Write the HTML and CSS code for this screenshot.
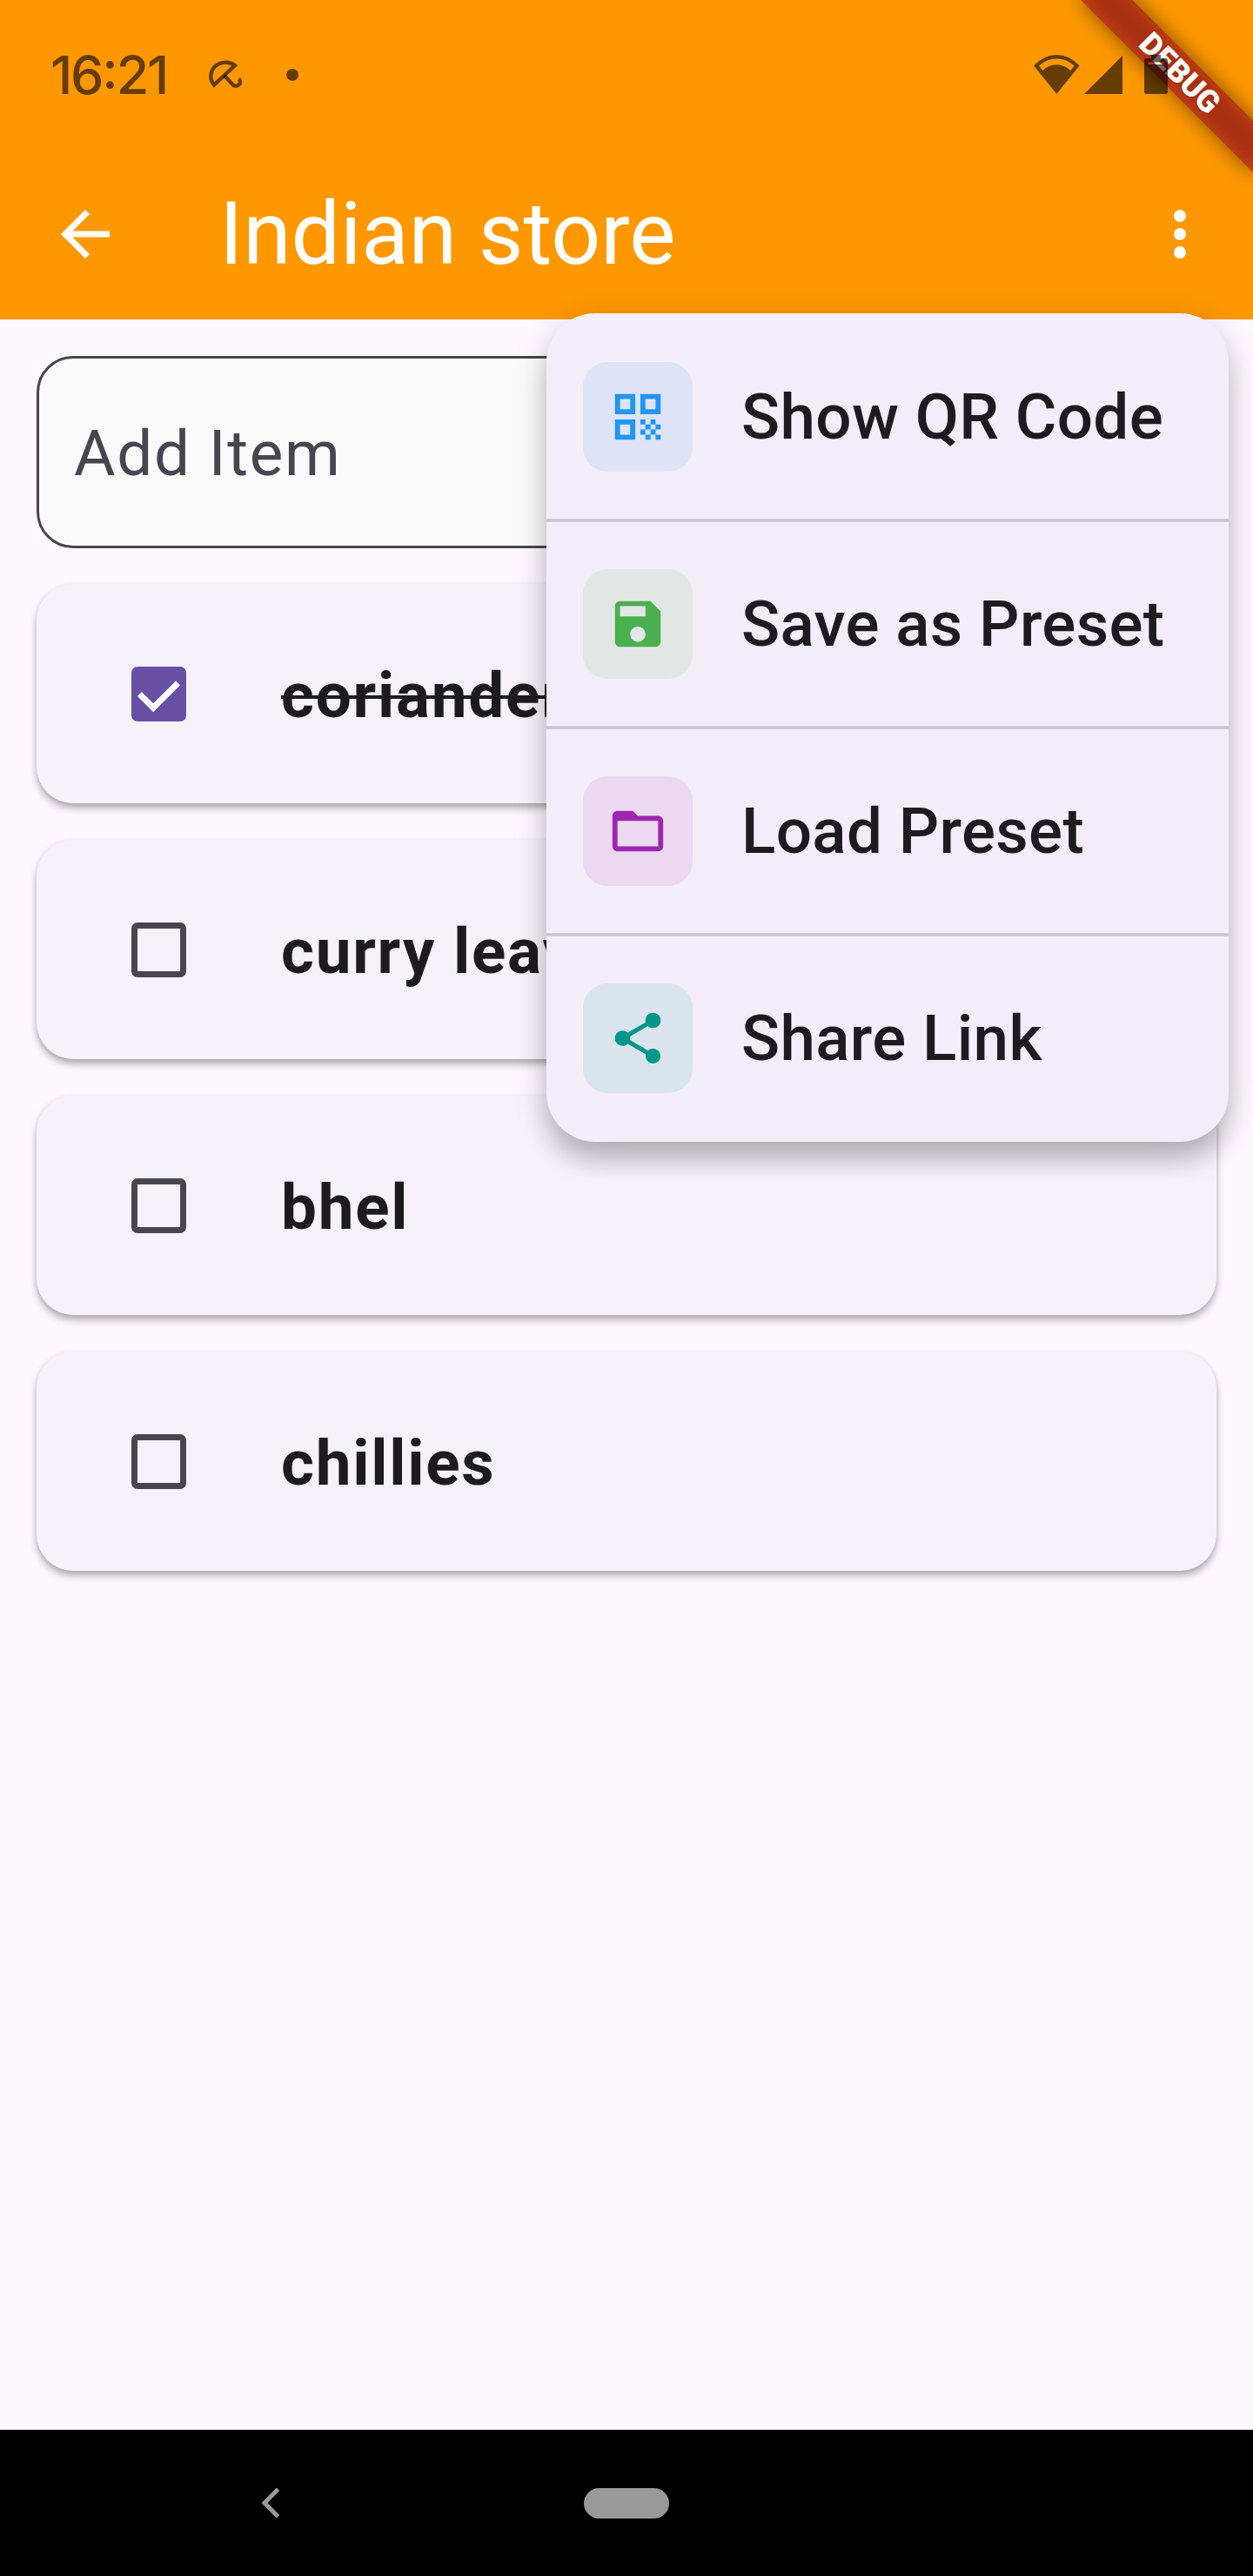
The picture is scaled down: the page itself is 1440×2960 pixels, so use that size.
FILE: index.html
```html
<!DOCTYPE html>
<html lang="en">
<head>
<meta charset="utf-8">
<title>Indian store</title>
<link rel="stylesheet" href="styles.css">
</head>
<body>
<div class="screen">
  <header class="header">
    <div class="status">
      <span class="time">16:21</span>
      <svg class="umbrella" width="40" height="34" viewBox="0 0 40 34" fill="none" stroke="currentColor" stroke-width="4.4">
        <path d="M5.9 28.7C-.5 21 2 10 10 5.200C17 .9 25.500 2.500 30 6.200Z"/>
        <path d="M17.500 17.500L27.500 28.200C30.500 31.500 36.500 29 36 24.500Q35.600 22.500 34.300 21.600"/>
      </svg>
      <span class="dot"></span>
      <span class="spacer"></span>
      <svg class="wifi" width="53" height="45" viewBox="0 0 53 45" fill="currentColor">
        <path fill-rule="evenodd" d="M0 12.500Q11.500 0 26.300 0T52.600 12.500L26.300 45ZM6 12.800L10.300 18Q17 11.300 26.300 11.300T42.300 18L46.700 12.800Q38 4.500 26.300 4.500T6 12.800Z"/>
      </svg>
      <svg class="signal" width="44" height="44" viewBox="0 0 44 44" fill="currentColor"><path d="M44 0V44H0Z"/></svg>
      <svg class="battery" width="27" height="45" viewBox="0 0 27 45" fill="currentColor">
        <path fill-rule="evenodd" d="M8 0H19V4H25Q27 4 27 6V43Q27 45 25 45H2Q0 45 0 43V6Q0 4 2 4H8ZM4.500 8.500V11H22.500V8.500Z"/>
      </svg>
    </div>
    <div class="appbar">
      <svg class="back" width="84" height="84" viewBox="0 0 24 24" fill="#fff"><path d="M20 11H7.830l5.590-5.590L12 4l-8 8 8 8 1.410-1.410L7.830 13H20v-2z"/></svg>
      <h1 class="title">Indian store</h1>
      <svg class="more" width="84" height="84" viewBox="0 0 24 24" fill="#fff"><circle cx="12" cy="6" r="2"/><circle cx="12" cy="12" r="2"/><circle cx="12" cy="18" r="2"/></svg>
    </div>
  </header>

  <main class="content">
    <div class="field">Add Item</div>
    <ul class="list">
      <li class="card">
        <span class="check checked"><svg width="63" height="63" viewBox="0 0 18 18" fill="none" stroke="#fff" stroke-width="2"><path d="M2.700 9L7.200 13.500L15.300 5.400"/></svg></span>
        <span class="name done">coriander</span>
      </li>
      <li class="card"><span class="check"></span><span class="name">curry leaves</span></li>
      <li class="card"><span class="check"></span><span class="name">bhel</span></li>
      <li class="card"><span class="check"></span><span class="name">chillies</span></li>
    </ul>
  </main>

  <nav class="navbar">
    <svg class="nav-back" width="22" height="36" viewBox="0 0 22 36" fill="none" stroke="#999" stroke-width="5"><path d="M19.500 2.300L4 18L19.500 33.700"/></svg>
    <span class="pill"></span>
  </nav>

  <div class="menu">
    <div class="menu-item">
      <span class="badge qr"><svg width="70" height="70" viewBox="0 0 24 24" fill="currentColor"><path d="M3 11h8V3H3v8zm2-6h4v4H5V5zM3 21h8v-8H3v8zm2-6h4v4H5v-4zM13 3v8h8V3h-8zm6 6h-4V5h4v4zM19 19h2v2h-2zM13 13h2v2h-2zM15 15h2v2h-2zM13 17h2v2h-2zM15 19h2v2h-2zM17 17h2v2h-2zM17 13h2v2h-2zM19 15h2v2h-2z"/></svg></span>
      <span>Show QR Code</span>
    </div>
    <div class="divider"></div>
    <div class="menu-item">
      <span class="badge save"><svg width="70" height="70" viewBox="0 0 24 24" fill="currentColor"><path d="M17 3H5c-1.110 0-2 .9-2 2v14c0 1.100.89 2 2 2h14c1.100 0 2-.9 2-2V7l-4-4zm-5 16c-1.660 0-3-1.340-3-3s1.340-3 3-3 3 1.340 3 3-1.340 3-3 3zm3-10H5V5h10v4z"/></svg></span>
      <span>Save as Preset</span>
    </div>
    <div class="divider"></div>
    <div class="menu-item">
      <span class="badge load"><svg width="70" height="70" viewBox="0 0 24 24" fill="currentColor"><path d="M20 6h-8l-2-2H4c-1.100 0-1.990.9-1.990 2L2 18c0 1.100.9 2 2 2h16c1.100 0 2-.9 2-2V8c0-1.100-.9-2-2-2zm0 12H4V8h16v10z"/></svg></span>
      <span>Load Preset</span>
    </div>
    <div class="divider"></div>
    <div class="menu-item">
      <span class="badge share"><svg width="70" height="70" viewBox="0 0 24 24" fill="currentColor"><path d="M18 16.080c-.76 0-1.440.3-1.960.77L8.910 12.700c.05-.23.090-.46.090-.7s-.04-.47-.09-.7l7.050-4.110c.54.5 1.250.81 2.040.81 1.660 0 3-1.340 3-3s-1.340-3-3-3-3 1.340-3 3c0 .24.040.47.090.7L8.040 9.810C7.500 9.310 6.790 9 6 9c-1.660 0-3 1.340-3 3s1.340 3 3 3c.79 0 1.500-.31 2.040-.81l7.120 4.160c-.05.21-.08.43-.08.65 0 1.610 1.310 2.920 2.920 2.920s2.920-1.310 2.920-2.920-1.310-2.920-2.920-2.920z"/></svg></span>
      <span>Share Link</span>
    </div>
  </div>

  <div class="ribbon"><span class="ribbon-label">DEBUG</span></div>
</div>
</body>
</html>
```
FILE: styles.css
```css
* { box-sizing: border-box; }

body {
  margin: 0;
  font-family: Roboto, sans-serif;
  color: #1d1b20;
}

svg { display: block; flex: none; }

.screen {
  position: relative;
  display: flex;
  flex-direction: column;
  width: 1440px;
  height: 2960px;
  overflow: hidden;
  background: #fef7ff;
}

.header {
  height: 367px;
  background: #ff9800;
}

/* system status icons are painted over the app, ribbon included */
.status {
  position: relative;
  z-index: 3;
  display: flex;
  align-items: center;
  height: 171px;
  padding: 0 98px 0 58px;
  color: rgba(0, 0, 0, 0.6);
}

.time {
  width: 182px;
  font: 550 61px/70px Inter, sans-serif;
  font-feature-settings: "case";
  letter-spacing: -2.2px;
}

.dot {
  width: 14px;
  height: 14px;
  margin-left: 49px;
  border-radius: 50%;
  background: currentColor;
}

.spacer { flex: 1; }
.signal { margin-left: 5px; }
.battery { margin-left: 25px; }

.appbar {
  display: flex;
  align-items: center;
  height: 196px;
  padding: 0 42px 0 56px;
}

.title {
  flex: 1;
  margin: 0 0 0 112px;
  color: #fff;
  font-size: 100.1px;
  font-weight: 400;
  line-height: 120px;
}

.content {
  flex: 1;
  padding: 42px;
}

.field {
  display: flex;
  align-items: center;
  height: 221px;
  padding: 3px 40px 0;
  border: 3.5px solid #49454f;
  border-radius: 42px;
  background: #fafafa;
  color: #49454f;
  font-size: 72.8px;
  letter-spacing: 1.75px;
}

.list {
  display: flex;
  flex-direction: column;
  gap: 42px;
  margin: 41px 0 0;
  padding: 0;
  list-style: none;
}

.card {
  display: flex;
  align-items: center;
  height: 252px;
  padding-left: 108.5px;
  border-radius: 42px;
  background: #f7f2fa;
  box-shadow: 0 6px 9px rgba(0, 0, 0, 0.28), 0 1px 6px rgba(0, 0, 0, 0.08);
}

.check {
  width: 63px;
  height: 63px;
  border: 7px solid #49454f;
  border-radius: 7px;
}

.checked {
  border: 0;
  background: #6750a4;
}

.name {
  margin-left: 109.5px;
  padding-top: 4px;
  font-size: 72.8px;
  font-weight: 700;
  letter-spacing: 1.75px;
}

.done { text-decoration: line-through; text-decoration-thickness: 4px; }

.navbar {
  display: flex;
  align-items: center;
  height: 168px;
  padding-left: 300px;
  background: #000;
}

.pill {
  width: 98px;
  height: 35px;
  margin-left: 349px;
  border-radius: 18px;
  background: #999;
}

.menu {
  position: absolute;
  z-index: 1;
  top: 360px;
  left: 628px;
  width: 784px;
  border-radius: 56px;
  background: #f3edf7;
  box-shadow: 0 24px 30px -2px rgba(0, 0, 0, 0.2), 0 6px 42px rgba(0, 0, 0, 0.14);
}

.menu-item {
  display: flex;
  align-items: center;
  gap: 56px;
  height: 238px;
  padding: 0 42px;
  font-size: 72.8px;
  font-weight: 500;
  letter-spacing: 0.35px;
  white-space: nowrap;
}

.divider {
  height: 4px;
  margin: -2px 0;
  border: solid #d4ced9;
  border-width: 1px 0;
  background: #cac4d0;
}

.badge {
  display: grid;
  place-items: center;
  width: 126px;
  height: 126px;
  border-radius: 28px;
}

.qr { color: #2196f3; background: #dde4f7; }
.save { color: #4caf50; background: #e2e7e6; }
.load { color: #9c27b0; background: #ead9f0; }
.share { color: #009688; background: #dae4ec; }

.ribbon {
  position: absolute;
  z-index: 2;
  top: 98px;
  left: 1300px;
  width: 280px;
  height: 42px;
  transform-origin: 140px -98px;
  transform: rotate(45deg);
}

.ribbon::before {
  content: "";
  position: absolute;
  inset: 0;
  background: rgba(0, 0, 0, 0.5);
  filter: blur(12.5px);
}

.ribbon-label {
  position: relative;
  display: block;
  height: 42px;
  background: rgba(183, 28, 28, 0.63);
  color: #fff;
  font-size: 35.7px;
  font-weight: 900;
  line-height: 42px;
  text-align: center;
}
```
